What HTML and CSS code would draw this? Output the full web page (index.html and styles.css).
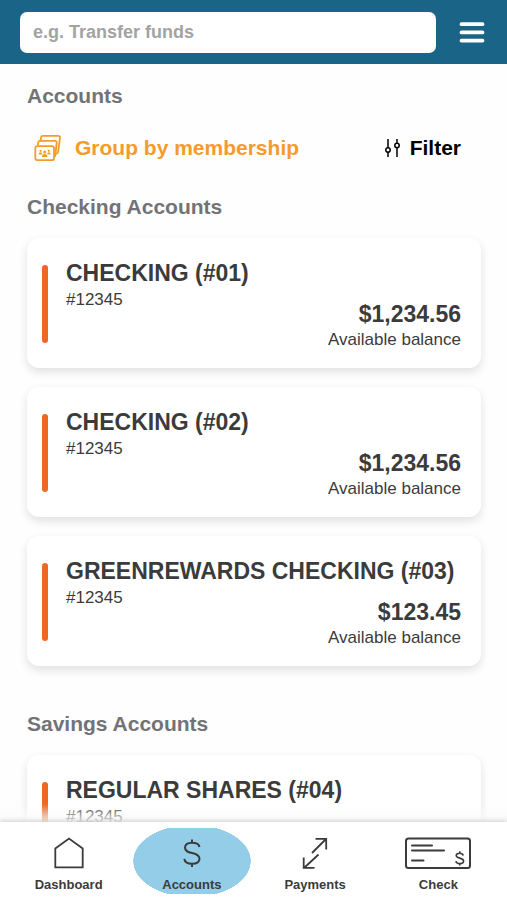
FILE: index.html
```html
<!DOCTYPE html>
<html lang="en">
<head>
<meta charset="utf-8">
<meta name="viewport" content="width=device-width, initial-scale=1">
<title>Accounts</title>
<link rel="stylesheet" href="styles.css">
</head>
<body>
<header class="topbar">
  <input class="search" type="search" placeholder="e.g. Transfer funds" aria-label="Search">
  <button class="menu" type="button" aria-label="Menu">
    <svg width="26" height="22" viewBox="0 0 26 22"><path d="M2.500 2.200h21M2.500 10.400h21M2.500 18.600h21" stroke="#fff" stroke-width="3.800" stroke-linecap="round"/></svg>
  </button>
</header>

<main class="content">
  <h1 class="heading">Accounts</h1>
  <div class="tools">
    <button class="tool tool-group" type="button">
      <svg width="28" height="28" viewBox="0 0 28 28" fill="none" stroke="currentColor" stroke-width="1.800" stroke-linejoin="round">
        <rect x="1.300" y="12.200" width="18.700" height="14" rx="2"/>
        <path d="M3.800 11.500l.4-3q.3-1.700 2-1.700h14.500q2.300 0 2 2l-1.400 12.500q-.2 1-1 1.300"/>
        <path d="M6.600 6.500l.4-3q.3-1.700 2-1.700h15q2.300 0 2 2l-1.900 14q-.3 1.700-2 2"/>
        <g fill="currentColor" stroke="none"><circle cx="6.600" cy="16.800" r="1.100"/><circle cx="14.800" cy="16.800" r="1.100"/><circle cx="10.700" cy="18" r="1.500"/><path d="M4.600 20.400q0-2.200 2-2.200t1.600 2.200zM13.200 20.400q0-2.200 1.600-2.200t2 2.200zM7.900 23q0-2.900 2.800-2.900t2.800 2.900z"/></g>
      </svg>
      Group by membership
    </button>
    <button class="tool tool-filter" type="button">
      <svg width="16" height="20" viewBox="0 0 16 20" fill="none" stroke="currentColor" stroke-width="1.500">
        <path d="M4 1v8.700M4 14.300v4.700M13 1v4.200M13 9.800v9.200"/><circle cx="4" cy="12" r="2.200"/><circle cx="13" cy="7.500" r="2.200"/>
      </svg>
      Filter
    </button>
  </div>

  <section class="group">
    <h2 class="heading">Checking Accounts</h2>
    <article class="card">
      <div class="details">
        <h3 class="name">CHECKING (#01)</h3>
        <div class="row">
          <p class="note">#12345</p>
          <div class="balance"><p class="amount">$1,234.56</p><p class="note">Available balance</p></div>
        </div>
      </div>
    </article>
    <article class="card">
      <div class="details">
        <h3 class="name">CHECKING (#02)</h3>
        <div class="row">
          <p class="note">#12345</p>
          <div class="balance"><p class="amount">$1,234.56</p><p class="note">Available balance</p></div>
        </div>
      </div>
    </article>
    <article class="card">
      <div class="details">
        <h3 class="name">GREENREWARDS CHECKING (#03)</h3>
        <div class="row">
          <p class="note">#12345</p>
          <div class="balance"><p class="amount">$123.45</p><p class="note">Available balance</p></div>
        </div>
      </div>
    </article>
  </section>

  <section class="group">
    <h2 class="heading">Savings Accounts</h2>
    <article class="card">
      <div class="details">
        <h3 class="name">REGULAR SHARES (#04)</h3>
        <div class="row">
          <p class="note">#12345</p>
        </div>
      </div>
    </article>
  </section>
</main>

<nav class="tabs">
  <a class="tab" href="#dashboard">
    <svg width="30" height="32" viewBox="0 0 30 32" fill="none" stroke="currentColor" stroke-width="1.800"><path d="M1.300 30.300V11.500L15 1.600l13.700 9.900v18.800z"/></svg>
    Dashboard
  </a>
  <a class="tab active" href="#accounts" aria-current="page">
    <svg width="20" height="32" viewBox="0 0 20 32" fill="none" stroke="currentColor" stroke-width="2"><path d="M17.500 10C17 7.200 14 5.800 10 5.800S3 7.500 3 10.800c0 3.500 3 4.300 7 5.200s7.500 2.100 7.500 5.700c0 3.300-3.300 5-7.500 5S2.800 25 2.300 21.800M10 2.500v3.300M10 26.700V30"/></svg>
    Accounts
  </a>
  <a class="tab" href="#payments">
    <svg width="26" height="32" viewBox="0 0 26 32" fill="none" stroke="currentColor" stroke-width="1.800"><path d="M10 16L24 2M13.500 1.800h10.700v10.700M16.500 17.500L2 31M1.700 20.500v10.300h10.800"/></svg>
    Payments
  </a>
  <a class="tab" href="#check">
    <svg width="68" height="32" viewBox="0 0 68 32" fill="none" stroke="currentColor" stroke-width="2"><rect x="2" y="1.500" width="64" height="29.500" rx="2.500"/><path d="M8 8.500h20M8 13.500h32M8 23.500h11.500" stroke-linecap="round"/><path d="M59.300 18.500c-.4-1.700-1.800-2.300-3.600-2.300-2.100 0-3.500.9-3.500 2.400 0 1.600 1.500 2 3.500 2.500s3.900 1.100 3.900 2.900c0 1.700-1.600 2.600-3.800 2.600-2.100 0-3.600-.8-3.900-2.500M55.800 14.200v2M55.800 26.500v2" stroke-width="1.600"/></svg>
    Check
  </a>
</nav>
</body>
</html>
```
FILE: styles.css
```css
* {
  box-sizing: border-box;
}

body {
  margin: 0;
  height: 100vh;
  display: flex;
  flex-direction: column;
  background: #fefefe;
  color: #3b3b3b;
  font-family: "Liberation Sans", Arial, sans-serif;
}

h1,
h2,
h3,
p {
  margin: 0;
}

button {
  border: 0;
  padding: 0;
  background: none;
  font: inherit;
  cursor: pointer;
}

svg {
  display: block;
  flex: none;
}

.topbar {
  display: flex;
  align-items: center;
  gap: 23px;
  padding: 12px 22px 11px 20px;
  background: #1a6587;
}

.search {
  flex: 1;
  min-width: 0;
  height: 41px;
  padding: 0 13px;
  border: 0;
  border-radius: 7px;
  background: #fff;
  color: #3b3b3b;
  font: bold 18px "Liberation Sans", Arial, sans-serif;
}

.search::placeholder {
  color: #a3a3a3;
  opacity: 1;
}

.content {
  position: relative;
  flex: 1;
  min-height: 0;
  overflow: hidden;
  padding: 20px 26px 0 27px;
}

.content::after {
  content: "";
  position: absolute;
  right: 0;
  bottom: 0;
  left: 0;
  height: 18px;
  background: linear-gradient(rgba(254, 254, 254, 0), rgba(250, 250, 250, 0.9));
}

.heading {
  color: #727377;
  font-size: 21px;
  line-height: 24px;
}

.tools {
  display: flex;
  justify-content: space-between;
  padding: 26px 20px 33px 7px;
}

.tool {
  display: flex;
  align-items: center;
  font-size: 21px;
  font-weight: bold;
  line-height: 28px;
}

.tool-group {
  gap: 13px;
  color: #f59b2c;
}

.tool-filter {
  gap: 10px;
  color: #000;
}

.group {
  margin-bottom: 46px;
}

.card {
  display: flex;
  gap: 18px;
  margin-top: 19px;
  padding: 22px 20px 15px 15px;
  border-radius: 12px;
  background: #fff;
  box-shadow: 0 4px 10px rgba(0, 0, 0, 0.12);
}

.card::before {
  content: "";
  width: 6px;
  margin: 5px 0 10px;
  border-radius: 3px;
  background: #ec6925;
}

.details {
  flex: 1;
  min-width: 0;
}

.name {
  font-size: 23px;
  line-height: 27px;
  white-space: nowrap;
}

.row {
  display: flex;
  justify-content: space-between;
  min-height: 66px;
}

.note {
  font-size: 17px;
  line-height: 26px;
}

.balance {
  padding-top: 14px;
  text-align: right;
}

.amount {
  font-size: 23px;
  font-weight: bold;
  line-height: 26px;
}

.tabs {
  position: relative;
  display: grid;
  grid-template-columns: repeat(4, 1fr);
  gap: 6px;
  padding: 6px 10px;
  background: #fff;
  box-shadow: 0 -1px 5px rgba(0, 0, 0, 0.18);
}

.tab {
  display: flex;
  flex-direction: column;
  align-items: center;
  gap: 8px;
  padding: 9px 0 1px;
  color: #3b3b3b;
  font-size: 13px;
  font-weight: bold;
  line-height: 16px;
  text-decoration: none;
}

.active {
  background: radial-gradient(50% 55% at center, #94cde8 99%, transparent 100%);
}
```
